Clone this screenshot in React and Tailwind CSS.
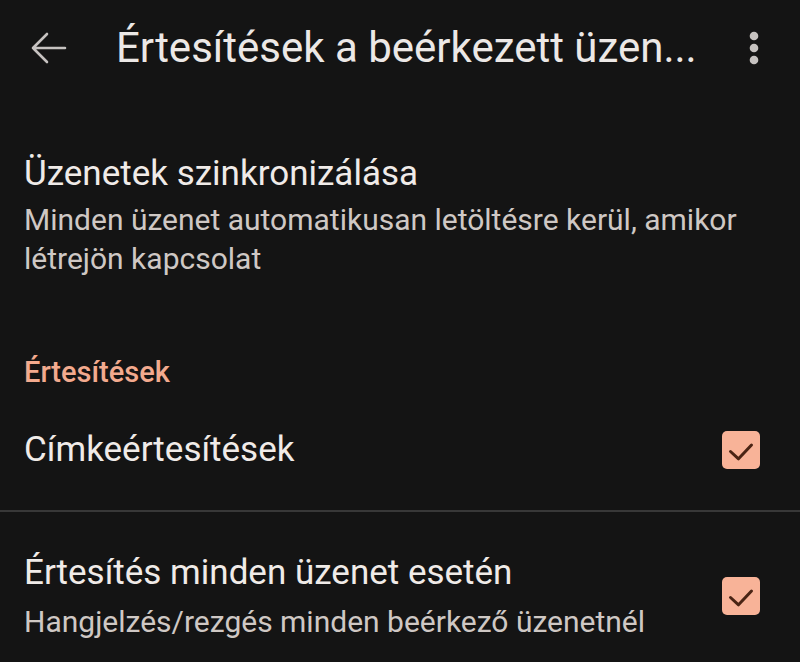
import React from "react";

function Checkbox() {
  return (
    <div className="w-[38px] h-[38px] rounded-[5px] bg-[#f8b398] flex items-center justify-center shrink-0">
      <svg width="38" height="38" viewBox="0 0 38 38" fill="none">
        <path d="M8.5 20.5l8 7.3L29.5 14" stroke="#4a2414" strokeWidth="3" strokeLinecap="round" strokeLinejoin="round" />
      </svg>
    </div>
  );
}

export default function App() {
  return (
    <div className="w-[800px] h-[662px] bg-[#141414] text-[#ece7e4] overflow-hidden" style={{ fontFamily: "Roboto, 'Noto Sans', sans-serif" }}>
      {/* top bar */}
      <div className="h-[96px] flex items-center pl-[29px] pr-[40px]">
        <svg width="38" height="34" viewBox="0 0 38 34" fill="none" className="shrink-0">
          <path d="M36 17H4M18 3L4 17l14 14" stroke="#c6c2c0" strokeWidth="2.6" strokeLinecap="round" strokeLinejoin="round" />
        </svg>
        <div className="ml-[49px] flex-1 text-[42px] leading-none text-[#ece8e6] whitespace-nowrap">
          Értesítések a beérkezett üzen...
        </div>
        <svg width="12" height="34" viewBox="0 0 12 34" className="shrink-0">
          <circle cx="6" cy="5" r="4.3" fill="#c6c2c0" />
          <circle cx="6" cy="17" r="4.3" fill="#c6c2c0" />
          <circle cx="6" cy="29" r="4.3" fill="#c6c2c0" />
        </svg>
      </div>

      {/* sync section */}
      <div className="px-[24px] pt-[56px]">
        <div className="text-[35px] leading-[44px] text-[#f0ebe8]">Üzenetek szinkronizálása</div>
        <div className="mt-[4px] text-[30px] leading-[39px] text-[#cfc8c4]">
          Minden üzenet automatikusan letöltésre kerül, amikor
          <br />
          létrejön kapcsolat
        </div>
      </div>

      {/* notifications header */}
      <div className="px-[24px] mt-[76px] text-[29px] leading-[36px] text-[#f3aa8e] font-medium">Értesítések</div>

      <div className="flex items-center justify-between pl-[24px] pr-[40px] h-[120px]">
        <div className="text-[35px] leading-[44px] text-[#f0ebe8]">Címkeértesítések</div>
        <Checkbox />
      </div>

      <div className="h-[2px] bg-[#383838]" />

      <div className="flex items-center justify-between pl-[24px] pr-[40px] pt-[39px]">
        <div>
          <div className="text-[35px] leading-[44px] text-[#f0ebe8]">Értesítés minden üzenet esetén</div>
          <div className="mt-[7px] text-[30px] leading-[39px] text-[#cfc8c4]">Hangjelzés/rezgés minden beérkező üzenetnél</div>
        </div>
        <Checkbox />
      </div>
    </div>
  );
}
